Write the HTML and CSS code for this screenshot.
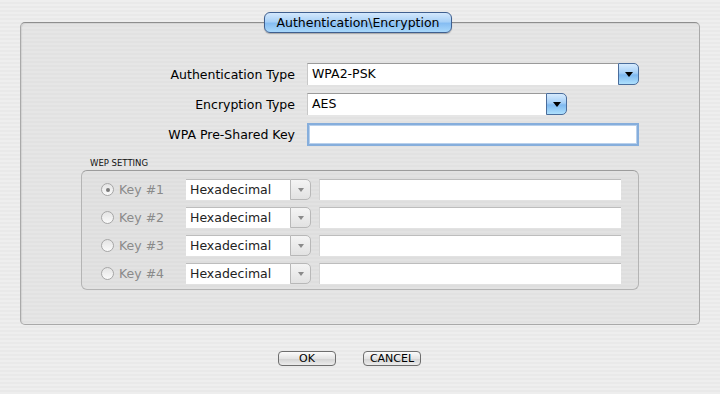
FILE: index.html
```html
<!DOCTYPE html>
<html>
<head>
    <meta charset="utf-8">
    <link rel="stylesheet" href="styles.css">
</head>
<body>
    <div class="window">
        <!-- Main group box -->
        <div class="panel">
            <div class="tab">Authentication\Encryption</div>

            <div class="form">
                <label class="field-label">Authentication Type</label>
                <div class="popup wide">
                    <span class="popup-value">WPA2-PSK</span>
                    <span class="popup-btn"><span class="arrow"></span></span>
                </div>

                <label class="field-label">Encryption Type</label>
                <div class="popup narrow">
                    <span class="popup-value">AES</span>
                    <span class="popup-btn"><span class="arrow"></span></span>
                </div>

                <label class="field-label">WPA Pre-Shared Key</label>
                <div class="text-input focused"></div>
            </div>

            <!-- WEP Setting -->
            <div class="wep">
                <div class="wep-title">WEP SETTING</div>
                <div class="wep-box">
                    <div class="key-row">
                        <span class="radio checked"></span>
                        <span class="key-label">Key #1</span>
                        <div class="popup small disabled">
                            <span class="popup-value">Hexadecimal</span>
                            <span class="popup-btn"><span class="arrow"></span></span>
                        </div>
                        <div class="key-input"></div>
                    </div>
                    <div class="key-row">
                        <span class="radio"></span>
                        <span class="key-label">Key #2</span>
                        <div class="popup small disabled">
                            <span class="popup-value">Hexadecimal</span>
                            <span class="popup-btn"><span class="arrow"></span></span>
                        </div>
                        <div class="key-input"></div>
                    </div>
                    <div class="key-row">
                        <span class="radio"></span>
                        <span class="key-label">Key #3</span>
                        <div class="popup small disabled">
                            <span class="popup-value">Hexadecimal</span>
                            <span class="popup-btn"><span class="arrow"></span></span>
                        </div>
                        <div class="key-input"></div>
                    </div>
                    <div class="key-row">
                        <span class="radio"></span>
                        <span class="key-label">Key #4</span>
                        <div class="popup small disabled">
                            <span class="popup-value">Hexadecimal</span>
                            <span class="popup-btn"><span class="arrow"></span></span>
                        </div>
                        <div class="key-input"></div>
                    </div>
                </div>
            </div>
        </div>

        <div class="actions">
            <button class="btn">OK</button>
            <button class="btn">CANCEL</button>
        </div>
    </div>
</body>
</html>
```

FILE: styles.css
```css
body {
    margin: 0;
    width: 720px;
    height: 394px;
    overflow: hidden;
    font-family: "DejaVu Sans", "Liberation Sans", sans-serif;
    font-size: 12px;
    color: #000;
    background: repeating-linear-gradient(to bottom, #eeeeee 0, #eeeeee 2px, #e9e9e9 2px, #e9e9e9 4px);
}

.window {
    padding: 22px 20px 0 20px;
}

.panel {
    display: flex;
    flex-direction: column;
    height: 303px;
    box-sizing: border-box;
    border: 1px solid #a9a9a9;
    border-top-color: #8e8e8e;
    border-radius: 5px;
    background: repeating-linear-gradient(to bottom, #e6e6e6 0, #e6e6e6 2px, #e2e2e2 2px, #e2e2e2 4px);
    box-shadow: inset 1px 1px 1px rgba(0, 0, 0, 0.08);
}

.tab {
    align-self: center;
    margin-top: -11px;
    margin-left: -4px;
    width: 188px;
    height: 21px;
    box-sizing: border-box;
    line-height: 19px;
    text-align: center;
    font-size: 12.5px;
    border: 1px solid #3f5f8f;
    border-radius: 6px;
    background: linear-gradient(to bottom, #d3e8fd 0%, #a9d1f7 45%, #86bdf2 55%, #a9d8fb 100%);
    box-shadow: 0 1px 1px rgba(0, 0, 0, 0.25);
}

.form {
    display: grid;
    grid-template-columns: 274px 332px;
    column-gap: 12px;
    row-gap: 8px;
    align-items: center;
    margin-top: 30px;
}

.field-label {
    text-align: right;
    font-size: 12.5px;
}

.popup {
    display: flex;
    height: 22px;
    box-sizing: border-box;
}

.popup.wide {
    width: 332px;
}

.popup.narrow {
    width: 260px;
}

.popup-value {
    flex: 1;
    background: #fff;
    border-top: 1px solid #9a9a9a;
    border-left: 1px solid #c8c8c8;
    padding-left: 4px;
    line-height: 20px;
    font-size: 12.5px;
}

.popup-btn {
    width: 19px;
    display: flex;
    align-items: center;
    justify-content: center;
    border: 1px solid #4a6d9c;
    border-radius: 0 5px 5px 0;
    background: linear-gradient(to bottom, #d6ebfe 0%, #a5cff7 45%, #7fb9f0 55%, #aee0fd 100%);
}

.arrow {
    width: 0;
    height: 0;
    border-left: 4px solid transparent;
    border-right: 4px solid transparent;
    border-top: 5px solid #000;
    margin-top: 1px;
}

.text-input {
    height: 23px;
    width: 332px;
    box-sizing: border-box;
    background: #fff;
    border: 1px solid #9a9a9a;
}

.text-input.focused {
    border: 2px solid #86aedc;
    box-shadow: inset 0 0 0 1px #b8d0ec;
}

.wep {
    margin: 12px 0 0 60px;
    width: 558px;
}

.wep-title {
    font-size: 8.5px;
    line-height: 11px;
    padding-left: 9px;
    margin-bottom: 1px;
    color: #111;
}

.wep-box {
    display: flex;
    flex-direction: column;
    gap: 7px;
    padding: 8px 0 5px 19px;
    border: 1px solid #b4b4b4;
    border-top-color: #9c9c9c;
    border-radius: 6px;
    background: repeating-linear-gradient(to bottom, #e2e2e2 0, #e2e2e2 2px, #dedede 2px, #dedede 4px);
}

.key-row {
    display: flex;
    align-items: center;
    height: 21px;
}

.radio {
    width: 11px;
    height: 11px;
    border: 1px solid #a6a6a6;
    border-radius: 50%;
    background: linear-gradient(to bottom, #e4e4e4, #fafafa);
    display: flex;
    align-items: center;
    justify-content: center;
}

.radio.checked::before {
    content: '';
    width: 4px;
    height: 4px;
    border-radius: 50%;
    background: #7a7a7a;
}

.key-label {
    width: 67px;
    margin-left: 5px;
    color: #8a8a8a;
    font-size: 12.5px;
}

.popup.small {
    width: 125px;
    height: 21px;
}

.popup.small .popup-value {
    line-height: 19px;
    color: #222;
    border-top-color: #bdbdbd;
    border-left: none;
}

.popup.disabled .popup-btn {
    border: 1px solid #b8b8b8;
    background: linear-gradient(to bottom, #f4f4f4, #e2e2e2);
}

.popup.disabled .arrow {
    border-left-width: 3px;
    border-right-width: 3px;
    border-top: 4px solid #8a8a8a;
}

.key-input {
    margin-left: 8px;
    width: 302px;
    height: 21px;
    box-sizing: border-box;
    background: #fff;
    border-top: 1px solid #bdbdbd;
    border-left: 1px solid #d4d4d4;
}

.actions {
    display: flex;
    gap: 27px;
    padding-left: 258px;
    margin-top: 26px;
}

.btn {
    width: 58px;
    height: 15px;
    padding: 0;
    font-family: "DejaVu Sans", "Liberation Sans", sans-serif;
    font-size: 11px;
    line-height: 13px;
    color: #000;
    border: 1px solid #6e6e6e;
    border-radius: 4px;
    background: linear-gradient(to bottom, #fbfbfb 0%, #e4e4e4 50%, #d2d2d2 51%, #ececec 100%);
}
```
